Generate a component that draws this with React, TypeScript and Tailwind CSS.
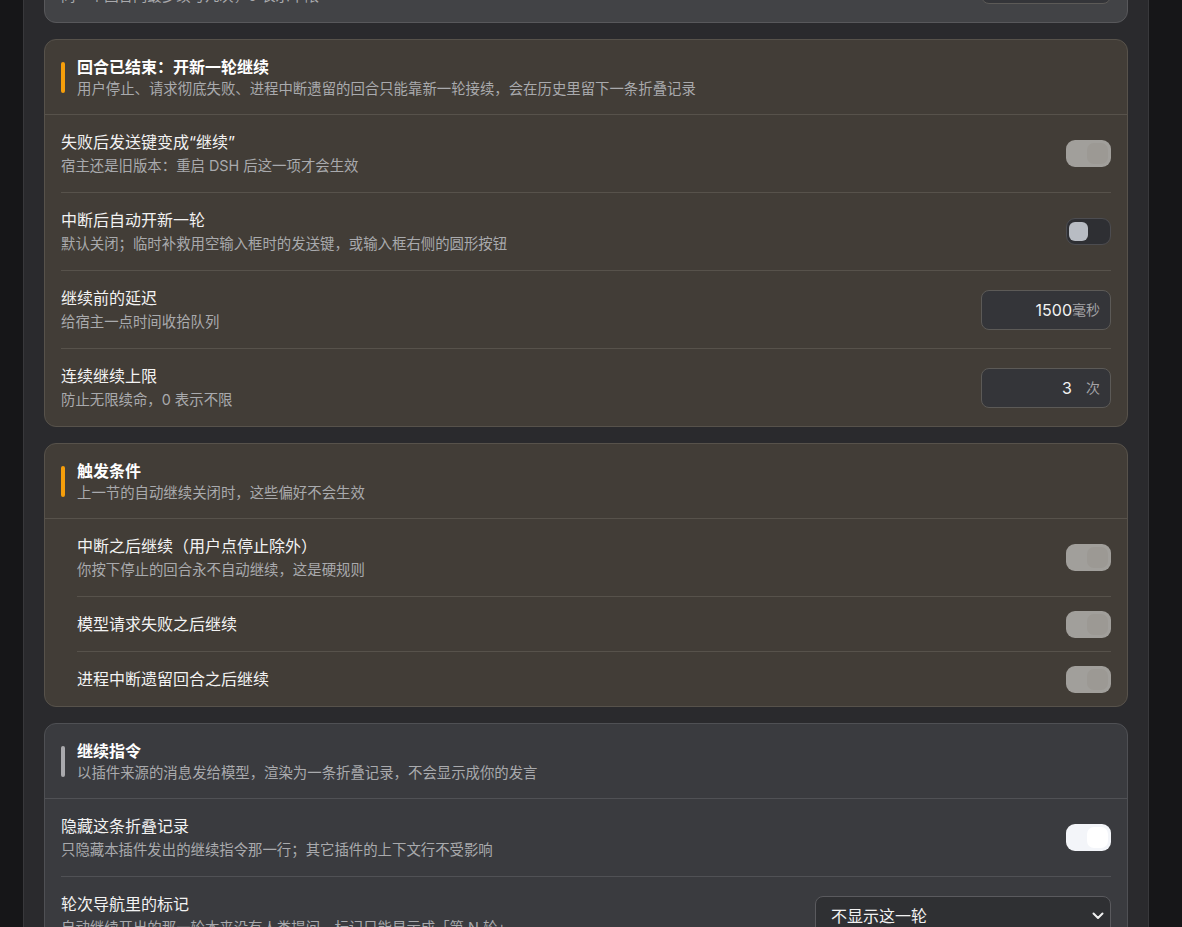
import type { ReactNode } from 'react'

type Control =
  | { kind: 'toggle'; state: 'off' | 'on' | 'dim' }
  | { kind: 'number'; value: string; unit: string }
  | { kind: 'select'; value: string }

type Row = {
  title: string
  desc?: string
  control: Control
}

type Section = {
  title: string
  desc: string
  tone: 'brown' | 'gray'
  indent?: boolean
  rows: Row[]
}

const sections: Section[] = [
  {
    title: '回合已结束：开新一轮继续',
    desc: '用户停止、请求彻底失败、进程中断遗留的回合只能靠新一轮接续，会在历史里留下一条折叠记录',
    tone: 'brown',
    rows: [
      {
        title: '失败后发送键变成“继续”',
        desc: '宿主还是旧版本：重启 DSH 后这一项才会生效',
        control: { kind: 'toggle', state: 'dim' },
      },
      {
        title: '中断后自动开新一轮',
        desc: '默认关闭；临时补救用空输入框时的发送键，或输入框右侧的圆形按钮',
        control: { kind: 'toggle', state: 'off' },
      },
      {
        title: '继续前的延迟',
        desc: '给宿主一点时间收拾队列',
        control: { kind: 'number', value: '1500', unit: '毫秒' },
      },
      {
        title: '连续继续上限',
        desc: '防止无限续命，0 表示不限',
        control: { kind: 'number', value: '3', unit: '次' },
      },
    ],
  },
  {
    title: '触发条件',
    desc: '上一节的自动继续关闭时，这些偏好不会生效',
    tone: 'brown',
    indent: true,
    rows: [
      {
        title: '中断之后继续（用户点停止除外）',
        desc: '你按下停止的回合永不自动继续，这是硬规则',
        control: { kind: 'toggle', state: 'dim' },
      },
      { title: '模型请求失败之后继续', control: { kind: 'toggle', state: 'dim' } },
      { title: '进程中断遗留回合之后继续', control: { kind: 'toggle', state: 'dim' } },
    ],
  },
  {
    title: '继续指令',
    desc: '以插件来源的消息发给模型，渲染为一条折叠记录，不会显示成你的发言',
    tone: 'gray',
    rows: [
      {
        title: '隐藏这条折叠记录',
        desc: '只隐藏本插件发出的继续指令那一行；其它插件的上下文行不受影响',
        control: { kind: 'toggle', state: 'on' },
      },
      {
        title: '轮次导航里的标记',
        desc: '自动继续开出的那一轮本来没有人类提问，标记只能显示成「第 N 轮」',
        control: { kind: 'select', value: '不显示这一轮' },
      },
    ],
  },
]

const tones = {
  brown: {
    card: 'bg-[#423d37] border-[#57524b]',
    line: 'border-[#57524b]',
    bar: 'bg-[#f59e0b]',
  },
  gray: {
    card: 'bg-[#3a3b3f] border-[#4f5054]',
    line: 'border-[#505155]',
    bar: 'bg-[#a9a9ad]',
  },
}

function Toggle({ state }: { state: 'off' | 'on' | 'dim' }) {
  if (state === 'off') {
    return (
      <div className="flex h-[27px] w-[45px] shrink-0 items-center rounded-[9px] border border-[#4c4c50] bg-[#2e2f33] pl-[2px]">
        <div className="h-[19px] w-[19px] rounded-[6px] bg-[#b8bcc3]" />
      </div>
    )
  }
  const on = state === 'on'
  return (
    <div
      className={
        on
          ? 'flex h-[27px] w-[45px] shrink-0 items-center justify-end rounded-[9px] bg-[#f3f5f9] pr-[3px]'
          : 'flex h-[27px] w-[45px] shrink-0 items-center justify-end rounded-[9px] bg-[#a19f9b] pr-[3px]'
      }
    >
      <div className={on ? 'h-[21px] w-[21px] rounded-[7px] bg-white' : 'h-[21px] w-[21px] rounded-[7px] bg-[#9c9994]'} />
    </div>
  )
}

function NumberBox({ value, unit }: { value: string; unit: string }) {
  return (
    <div className="flex h-10 w-[130px] shrink-0 items-center rounded-lg border border-[#5c5a57] bg-[#343539] pr-[10px]">
      <span className="flex-1 text-right text-[16px] text-[#f2f2f2]">{value}</span>
      <span className="w-7 text-right text-[14px] text-[#a3a3a6]">{unit}</span>
    </div>
  )
}

function SelectBox({ value }: { value: string }) {
  return (
    <div className="flex h-10 w-[296px] shrink-0 items-center justify-between rounded-lg border border-[#5a5a5e] bg-[#2f3033] pl-[15px] pr-[5px]">
      <span className="text-[16px] text-[#f2f2f2]">{value}</span>
      <svg width="12" height="8" viewBox="0 0 12 8" fill="none" className="mr-[1px]">
        <path d="M1.5 1.5 6 6l4.5-4.5" stroke="#f0f0f0" strokeWidth="2" strokeLinecap="round" strokeLinejoin="round" />
      </svg>
    </div>
  )
}

function renderControl(c: Control): ReactNode {
  if (c.kind === 'toggle') return <Toggle state={c.state} />
  if (c.kind === 'number') return <NumberBox value={c.value} unit={c.unit} />
  return <SelectBox value={c.value} />
}

function SettingRow({ row, first, line }: { row: Row; first: boolean; line: string }) {
  return (
    <div className={first ? 'flex items-center gap-6 py-4' : `flex items-center gap-6 border-t py-4 ${line}`}>
      <div className="min-w-0 flex-1">
        <p className="h-[22px] text-[16px] leading-[22px] text-[#f2f2f2]">{row.title}</p>
        {row.desc ? <p className="mt-[3px] h-5 text-[14.4px] leading-5 text-[#a9aaad]">{row.desc}</p> : null}
      </div>
      {/* control may overflow the 22px box; keeps single-line rows compact */}
      <div className="flex h-[22px] items-center">{renderControl(row.control)}</div>
    </div>
  )
}

function SectionCard({ section }: { section: Section }) {
  const t = tones[section.tone]
  return (
    <section className={`rounded-xl border ${t.card}`}>
      <div className={`flex items-center gap-3 border-b px-4 pb-[15px] pt-4 ${t.line}`}>
        <div className={`h-[31px] w-1 shrink-0 rounded-full ${t.bar}`} />
        <div>
          <h2 className="text-[16px] font-bold leading-[22px] text-white">{section.title}</h2>
          <p className="mt-[1px] text-[14.4px] leading-5 text-[#a9aaad]">{section.desc}</p>
        </div>
      </div>
      <div className={section.indent ? 'pl-8 pr-4' : 'px-4'}>
        {section.rows.map((row, i) => (
          <SettingRow key={row.title} row={row} first={i === 0} line={t.line} />
        ))}
      </div>
    </section>
  )
}

export default function App() {
  return (
    <div
      className="flex min-h-screen overflow-hidden bg-[#161618]"
      style={{ fontFamily: 'Inter, "Noto Sans CJK SC", sans-serif' }}
    >
      <div className="w-[23px] shrink-0" />
      <main className="w-[1126px] shrink-0 border-x border-[#38383b] bg-[#2a2a2d] px-5">
        <div className="-mt-[56px] space-y-4 pb-10">
          <section className="rounded-xl border border-[#58585b] bg-[#424346]">
            <div className="px-4">
              <SettingRow
                row={{
                  title: '单回合续写上限',
                  desc: '同一个回合内最多续写几次，0 表示不限',
                  control: { kind: 'number', value: '5', unit: '次' },
                }}
                first
                line="border-[#58585b]"
              />
            </div>
          </section>
          {sections.map((s) => (
            <SectionCard key={s.title} section={s} />
          ))}
        </div>
      </main>
    </div>
  )
}
